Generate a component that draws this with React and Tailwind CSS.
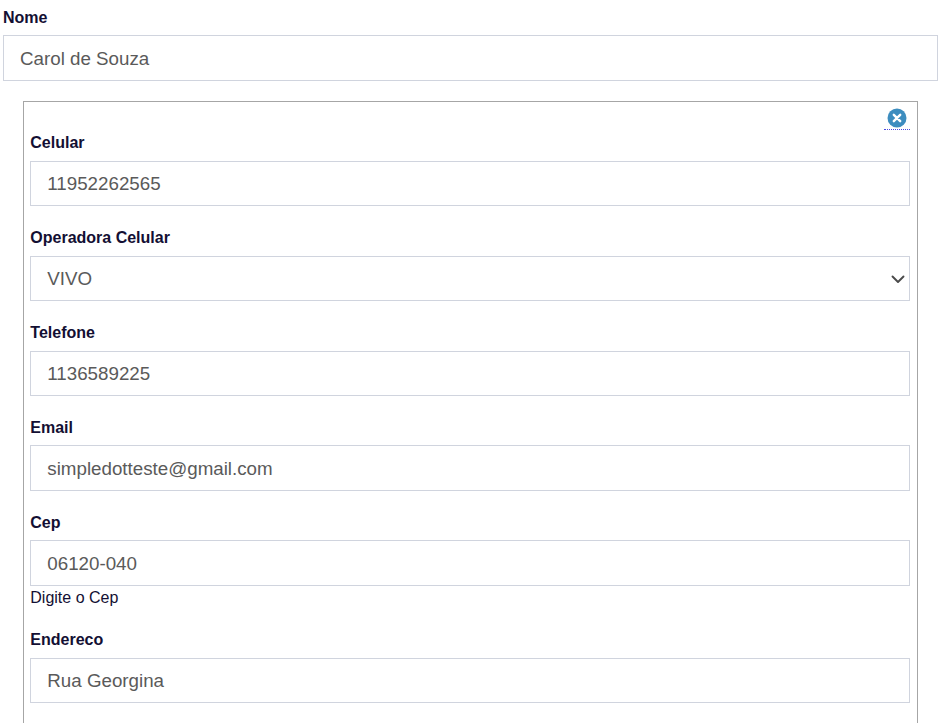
import React from "react";

function Label({ children }) {
  return <label className="block h-[24px] mb-[5.6px] text-[16px] leading-[24px] font-bold text-[#130f33]">{children}</label>;
}

const inputCls = "block w-full h-[45.5px] border border-[#d0d4de] bg-white text-[18.75px] text-[#5a5a5a] outline-none font-['Liberation_Sans',sans-serif]";

function Field({ label, value, hint }) {
  return (
    <div className="mb-[19.7px]">
      <Label>{label}</Label>
      <input readOnly value={value} className={inputCls + " px-[16px] pt-[1.4px]"} />
      {hint && <div className="h-[23px] text-[16px] leading-[24px] text-[#130f33]">{hint}</div>}
    </div>
  );
}

export default function App() {
  return (
    <div className="h-[723px] w-[945px] overflow-hidden bg-white pl-[3px] pr-[7px] pt-[6px] font-['Liberation_Sans',sans-serif]">
      <div className="mb-[20.9px]">
        <label className="block h-[24px] mb-[5px] text-[16px] leading-[24px] font-bold text-[#130f33]">Nome</label>
        <input readOnly value="Carol de Souza" className={inputCls + " px-[16px] pt-[2.4px]"} />
      </div>
      <div className="ml-[20px] mr-[20px] border border-[#a6a6a6] pl-[6.3px] pr-[7px] pt-[5px] pb-[20px]">
        <div className="flex justify-end h-[24px]">
          <span className="flex h-[23px] w-[26px] items-start justify-center border-b border-dotted border-[#4a4ae0]">
            <svg width="20" height="20" viewBox="0 0 20 20" className="mt-[1px]">
              <circle cx="10" cy="10" r="9.5" fill="#3d8dbf" />
              <path d="M6.8 6.8 L13.2 13.2 M13.2 6.8 L6.8 13.2" stroke="#fff" strokeWidth="2.4" strokeLinecap="round" />
            </svg>
          </span>
        </div>
        <Field label="Celular" value="11952262565" />
        <div className="mb-[19.7px]">
          <Label>Operadora Celular</Label>
          <div className="relative">
            <select defaultValue="VIVO" className={inputCls + " appearance-none pl-[16px] pr-[36px] pt-[0.6px]"}>
              <option>VIVO</option>
            </select>
            <svg width="16" height="16" viewBox="0 0 16 16" className="absolute right-[4px] top-[15px] pointer-events-none">
              <path d="M2.5 5.5l5.5 5.5 5.5-5.5" fill="none" stroke="#4a4a4a" strokeWidth="1.9" strokeLinecap="round" strokeLinejoin="round" />
            </svg>
          </div>
        </div>
        <Field label="Telefone" value="1136589225" />
        <Field label="Email" value="simpledotteste@gmail.com" />
        <Field label="Cep" value="06120-040" hint="Digite o Cep" />
        <Field label="Endereco" value="Rua Georgina" />
      </div>
    </div>
  );
}
